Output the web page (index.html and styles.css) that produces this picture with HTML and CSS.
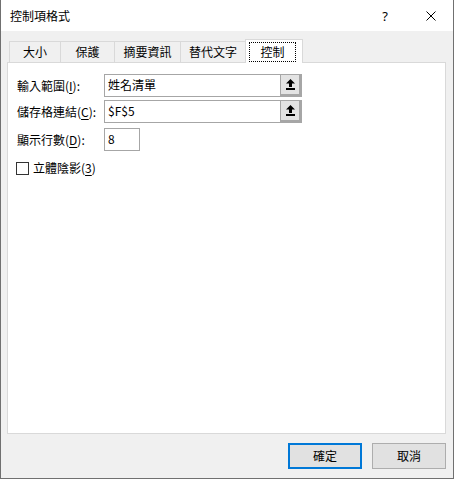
FILE: index.html
```html
<!DOCTYPE html>
<html lang="zh-Hant">
<head>
<meta charset="utf-8">
<link rel="stylesheet" href="styles.css">
</head>
<body>
<div class="window">
  <div class="titlebar">
    <span class="title">控制項格式</span>
    <span class="spacer"></span>
    <span class="help">?</span>
    <svg class="close" width="10" height="10" viewBox="0 0 10 10"><path d="M0.5 0.5 L9.5 9.5 M9.5 0.5 L0.5 9.5" stroke="#000" stroke-width="1" fill="none"/></svg>
  </div>
  <div class="body">
    <div class="tabs">
      <div class="tab t1">大小</div>
      <div class="tab t2">保護</div>
      <div class="tab t3">摘要資訊</div>
      <div class="tab t4">替代文字</div>
      <div class="tab active"><span class="focus">控制</span></div>
    </div>
    <div class="panel">
      <div class="row">
        <span class="label">輸入範圍(<u>I</u>):</span>
        <div class="ref">
          <span class="field">姓名清單</span>
          <span class="pick"><svg width="9" height="11" viewBox="0 0 9 11"><path d="M4.5 0 L0 4.5 L3 4.5 L3 8 L6 8 L6 4.5 L9 4.5 Z" fill="#000"/><rect x="0" y="9" width="9" height="2" fill="#000"/></svg></span>
        </div>
      </div>
      <div class="row r2">
        <span class="label">儲存格連結(<u>C</u>):</span>
        <div class="ref">
          <span class="field">$F$5</span>
          <span class="pick"><svg width="9" height="11" viewBox="0 0 9 11"><path d="M4.5 0 L0 4.5 L3 4.5 L3 8 L6 8 L6 4.5 L9 4.5 Z" fill="#000"/><rect x="0" y="9" width="9" height="2" fill="#000"/></svg></span>
        </div>
      </div>
      <div class="row r3">
        <span class="label">顯示行數(<u>D</u>):</span>
        <span class="num">8</span>
      </div>
      <div class="check-row">
        <span class="checkbox"></span>
        <span class="check-label">立體陰影(<u>3</u>)</span>
      </div>
    </div>
    <div class="buttons">
      <span class="btn ok">確定</span>
      <span class="btn">取消</span>
    </div>
  </div>
</div>
</body>
</html>
```

FILE: styles.css
```css
html, body {
  margin: 0;
  padding: 0;
  background: #f0f0f0;
}
body {
  font-family: "Noto Sans CJK TC", "Noto Sans", sans-serif;
  font-size: 12px;
  color: #000;
}
.window {
  width: 454px;
  height: 479px;
  box-sizing: border-box;
  border: 1px solid #707070;
  border-top: none;
  background: #f0f0f0;
  display: flex;
  flex-direction: column;
}
.titlebar {
  height: 31px;
  background: #fff;
  display: flex;
  align-items: center;
  padding-left: 9px;
  flex: none;
}
.title {
  line-height: 16px;
  margin-top: 0;
}
.spacer { flex: 1; }
.help {
  font-family: "Noto Sans", sans-serif;
  font-size: 13px;
  width: 10px;
  text-align: center;
  line-height: 16px;
  margin-right: 36px;
}
.close {
  margin-right: 17px;
  display: block;
}
.body {
  padding: 8px 7px 0 6px;
  display: flex;
  flex-direction: column;
}
.tabs {
  display: flex;
  align-items: flex-start;
  margin-left: 2px;
  height: 23px;
}
.tab {
  box-sizing: border-box;
  height: 21px;
  margin-top: 2px;
  border-top: 1px solid #d9d9d9;
  border-left: 1px solid #d9d9d9;
  background: #f0f0f0;
  display: flex;
  align-items: center;
  justify-content: center;
  line-height: 16px;
}
.t1 { width: 51px; }
.t2 { width: 54px; }
.t3 { width: 66px; }
.t4 { width: 65px; }
.tab.active {
  width: 58px;
  height: 24px;
  margin-top: 0;
  background: #fff;
  border: 1px solid #d9d9d9;
  border-bottom: none;
  position: relative;
  z-index: 2;
  justify-content: flex-start;
  align-items: flex-start;
  padding: 2px 0 0 3px;
}
.focus {
  box-sizing: border-box;
  width: 47px;
  height: 20px;
  border: 1px dotted #000;
  display: flex;
  align-items: center;
  justify-content: center;
}
.panel {
  box-sizing: border-box;
  width: 439px;
  height: 372px;
  background: #fff;
  border: 1px solid #d9d9d9;
  padding: 11px 0 0 9px;
  display: flex;
  flex-direction: column;
}
.row {
  display: flex;
  align-items: center;
  height: 23px;
}
.r2 { margin-top: 3px; }
.r3 { margin-top: 5px; }
.label {
  width: 87px;
  line-height: 16px;
  flex: none;
}
.label u, .check-label u { text-decoration-thickness: 1px; text-underline-offset: 2px; }
.ref {
  box-sizing: border-box;
  width: 198px;
  height: 23px;
  border: 1px solid #a6a6a6;
  display: flex;
}
.field {
  flex: 1;
  padding-left: 3px;
  line-height: 20px;
  background: #fff;
}
.pick {
  box-sizing: border-box;
  width: 21px;
  height: 21px;
  background: #e3e3e3;
  border-left: 1px solid #a6a6a6;
  border-right: 2px solid #a6a6a6;
  border-bottom: 2px solid #a6a6a6;
  display: flex;
  align-items: center;
  justify-content: center;
}
.pick svg { display: block; }
.num {
  box-sizing: border-box;
  width: 36px;
  height: 23px;
  border: 1px solid #a6a6a6;
  padding-left: 3px;
  line-height: 20px;
}
.check-row {
  display: flex;
  align-items: center;
  margin-top: 9px;
  margin-left: -1px;
}
.checkbox {
  box-sizing: border-box;
  width: 13px;
  height: 13px;
  border: 1px solid #333;
  background: #fff;
  margin-right: 4px;
}
.check-label { line-height: 16px; }
.buttons {
  display: flex;
  justify-content: flex-end;
  gap: 10px;
  margin-top: 9px;
}
.btn {
  box-sizing: border-box;
  width: 74px;
  height: 26px;
  background: #e1e1e1;
  border: 1px solid #adadad;
  display: flex;
  align-items: center;
  justify-content: center;
  line-height: 16px;
}
.btn.ok {
  border: 2px solid #0078d7;
}
```
